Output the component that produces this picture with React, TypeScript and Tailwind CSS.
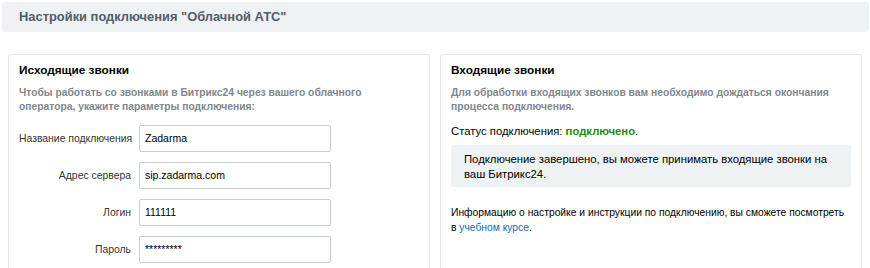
import React from "react";

const fields = [
  { label: "Название подключения", value: "Zadarma" },
  { label: "Адрес сервера", value: "sip.zadarma.com" },
  { label: "Логин", value: "111111" },
  { label: "Пароль", value: "*********" },
];

const App = () => {
  return (
    <div className="w-[870px] h-[268px] overflow-hidden bg-white font-['Liberation_Sans',Arial,sans-serif] text-[#333]">
      <div className="ml-[2px] mr-[1px] mt-[2px] h-[30px] rounded-[3px] bg-[#eef2f4] flex items-center pl-[17px]">
        <span className="text-[12.9px] font-bold text-[#535c69]">
          Настройки подключения "Облачной АТС"
        </span>
      </div>

      <div className="flex gap-[10px] mt-[22px] ml-[8px]">
        <div className="w-[422px] h-[240px] shrink-0 border border-[#e5e8ea] rounded-[2px] px-[10px] pt-[8px]">
          <div className="text-[11.8px] leading-[14px] font-bold text-black">Исходящие звонки</div>
          <div className="mt-[9px] text-[10.3px] font-bold leading-[14px] text-[#80868e] whitespace-nowrap">
            Чтобы работать со звонками в Битрикс24 через вашего облачного
            <br />
            оператора, укажите параметры подключения:
          </div>
          <div className="mt-[11px] flex flex-col gap-[10px]">
            {fields.map((f, i) => (
              <div key={i} className="flex items-center">
                <div className="w-[112px] text-right text-[10.4px] text-[#333] whitespace-nowrap">{f.label}</div>
                <div className="ml-[8px] w-[192px] h-[27px] border border-[#c6cdd3] rounded-[2px] flex items-center px-[5px] text-[10.5px] text-black">
                  {f.value}
                </div>
              </div>
            ))}
          </div>
        </div>

        <div className="w-[422px] h-[240px] shrink-0 border border-[#e5e8ea] rounded-[2px] px-[10px] pt-[8px]">
          <div className="text-[11.8px] leading-[14px] font-bold text-black">Входящие звонки</div>
          <div className="mt-[9px] text-[10.3px] font-bold leading-[14px] text-[#80868e] whitespace-nowrap">
            Для обработки входящих звонков вам необходимо дождаться окончания
            <br />
            процесса подключения.
          </div>
          <div className="mt-[10px] text-[11.3px] leading-[14px] text-black">
            Статус подключения: <span className="font-bold text-[#1e8a0c]">подключено</span>.
          </div>
          <div className="mt-[7px] w-[400px] rounded-[2px] bg-[#eef2f4] px-[13px] pt-[7px] pb-[5px] text-[11.3px] leading-[15px] text-black whitespace-nowrap">
            Подключение завершено, вы можете принимать входящие звонки на
            <br />
            ваш Битрикс24.
          </div>
          <div className="mt-[18px] text-[10.3px] leading-[15px] text-black whitespace-nowrap">
            Информацию о настройке и инструкции по подключению, вы сможете посмотреть
            <br />
            в <span className="text-[#2067b0]">учебном курсе</span>.
          </div>
        </div>
      </div>
    </div>
  );
};

export default App;
